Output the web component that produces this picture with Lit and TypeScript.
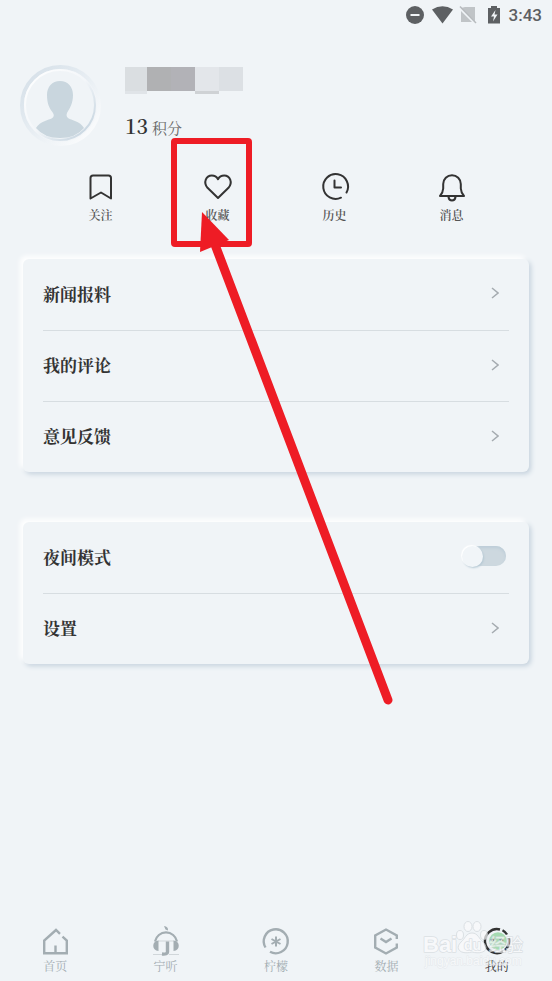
import { LitElement, html, css, svg } from "lit";
import { customElement, state } from "lit/decorators.js";

const bookmark = svg`<path d="M3.500 5Q3.500 2.500 6 2.500H21.500Q24 2.500 24 5V25.500L14 19.500L3.500 25.500Z"/>`;
const heart = svg`<path d="M14 25L3.500 14.800C-1 9.500 2 2.500 7.800 2.500C10.500 2.500 12.800 4 14 6.200C15.200 4 17.500 2.500 20.200 2.500C26 2.500 29 9.500 24.500 14.800Z"/>`;
const clock = svg`<path d="M20 24.700A12.400 12.400 0 1 1 25.500 19.500M13.500 7.500V14.500H20"/>`;
const bell = svg`<path d="M2 23Q5 19.500 5.200 15.500V11A8.800 8.800 0 0 1 22.800 11V15.500Q23 19.500 26 23Z"/><path d="M10.500 24Q11 27.500 14 27.500Q17 27.500 17.500 24"/>`;

const home = svg`<path d="M19 6.800L15 3L3.200 13.500V26.300H25.800V13.500L21.500 9.700M14.500 27V18.500"/>`;
const headset = svg`<path d="M3 14.500A11.200 11.200 0 0 1 25 14.500" stroke-width="2.200"/>
  <path d="M6.500 13.500V24C-.5 24-.5 13.500 6.500 13.500ZM21.500 13.500V24C28.500 24 28.500 13.500 21.500 13.500ZM12 -1Q16.500-.5 16 3.500L13.500 2.500Z" fill="currentColor" stroke="none"/>
  <path d="M6 14H22M1 27.500H10M17 27.500H27" stroke-width=".7" opacity=".6"/>
  <path d="M15.500 14.500V25Q15.500 27.500 10 27" stroke-width="3.400"/>`;
const lemon = svg`<path d="M3.500 20.500A12 12 0 1 1 8 24.800"/><path d="M14 9.500V19.500M9.500 12L18.500 17M18.500 12L9.500 17" stroke-width="2"/>`;
const hexagon = svg`<path d="M24.800 12V8.500L14 2.500L3.200 8.500V20.500L14 26.500L24.800 20.500V16.500"/><path d="M8.500 11.500L14 15L19.500 11.500"/>`;
const face = svg`<circle cx="15" cy="14" r="8.800" fill="#a5dbb1" stroke="none"/><path d="M17 2.500A12 12 0 1 0 20 24.500M19.500 3.200Q22.500 4.800 24 7.500M25.800 11A12 12 0 0 1 22 23"/><path d="M8 13.500Q9.500 11 11 13.500M17 13.500Q18.500 11 20 13.500" stroke-width="1.600"/>`;

const shortcuts = [
  { label: "关注", icon: bookmark },
  { label: "收藏", icon: heart },
  { label: "历史", icon: clock },
  { label: "消息", icon: bell },
];

const tabs = [
  { label: "首页", icon: home },
  { label: "宁听", icon: headset },
  { label: "柠檬", icon: lemon },
  { label: "数据", icon: hexagon },
  { label: "我的", icon: face, active: true },
];

@customElement("app-root")
export class AppRoot extends LitElement {
  @state() private night = false;

  static styles = css`
    :host {
      display: flex;
      flex-direction: column;
      position: relative;
      min-height: 100vh;
      box-sizing: border-box;
      overflow: hidden;
      background: #f0f4f7;
      color: #333;
      font-family: "Noto Serif CJK SC", "Liberation Serif", "Noto Sans CJK SC", serif;
    }
    a { color: inherit; text-decoration: none; }
    svg { display: block; }
    .status {
      display: flex;
      justify-content: flex-end;
      align-items: center;
      height: 30px;
      padding-right: 10px;
      color: #5d6063;
      font: 500 17px/30px Roboto, sans-serif;
    }
    .status svg { width: 94px; height: 20px; margin-right: 9px; }
    .profile {
      display: flex;
      gap: 24px;
      padding: 35px 20px 0;
    }
    .avatar {
      width: 81px;
      height: 81px;
    }
    .who { display: flex; flex-direction: column; padding-top: 2px; }
    .name { width: 118px; height: 27px; }
    .points {
      margin: 19px 0 0;
      display: flex;
      align-items: baseline;
      gap: 4px;
      line-height: 26px;
    }
    .points b { font-size: 20px; font-weight: 600; }
    .points span { font-size: 15px; color: #666; }
    .shortcuts {
      display: grid;
      grid-template-columns: repeat(4, 1fr);
      padding: 27px 42px 0;
    }
    .shortcut, .tab {
      display: flex;
      flex-direction: column;
      align-items: center;
      font-size: 12px;
      line-height: 16px;
    }
    .shortcut { font-weight: 600; color: #555; gap: 6px; }
    .icon {
      width: 28px;
      height: 28px;
      fill: none;
      stroke: #333;
      stroke-width: 2;
      stroke-linejoin: round;
      stroke-linecap: round;
      overflow: visible;
    }
    .card {
      margin: 36px 23px 0;
      padding: 0 20px;
      border-radius: 6px;
      background: #f0f4f7;
      box-shadow: -3px -3px 5px #fff, 2px 2px 5px #c3d0dc;
    }
    .card + .card { margin-top: 50px; }
    .row {
      display: flex;
      align-items: center;
      justify-content: space-between;
      box-sizing: border-box;
      height: 71px;
      padding-bottom: 3px;
      font-size: 17px;
      font-weight: 700;
    }
    .row + .row { border-top: 1px solid #d7dde1; }
    .chevron {
      width: 8px;
      height: 12px;
      margin-right: 10px;
      fill: none;
      stroke: #a5abb0;
      stroke-width: 1.5;
    }
    .switch {
      appearance: none;
      display: flex;
      align-items: center;
      width: 36px;
      height: 20px;
      margin: 0 3px 0 0;
      border-radius: 10px;
      background: #cdd8df;
      box-shadow: inset 0 2px 3px #bdcdd8;
    }
    .switch::before {
      content: "";
      width: 21px;
      height: 21px;
      flex: none;
      margin-left: -8px;
      border-radius: 50%;
      background: #f1f5f8;
      box-shadow: -1px -1px 1px #fff, 1px 1px 2px #b5c8d4;
    }
    .switch:checked::before { margin-left: 17px; }
    .tabs {
      display: grid;
      grid-template-columns: repeat(5, 1fr);
      margin-top: auto;
      padding: 20px 0 7px;
    }
    .tab { color: #a3adb2; gap: 3px; }
    .tab .icon {
      stroke: currentColor;
      stroke-width: 2.4;
      stroke-linecap: butt;
      stroke-linejoin: miter;
    }
    .tab.active { color: #333; }
    .overlay {
      position: absolute;
      top: 0;
      left: 0;
      pointer-events: none;
    }
    .watermark {
      position: absolute;
      right: 28px;
      bottom: 8px;
      pointer-events: none;
    }
    .watermark text {
      font-family: "Liberation Sans", "Noto Sans CJK SC", sans-serif;
      fill: #fafbfc;
      stroke: #d3d8dc;
      stroke-width: 1.5;
      stroke-linejoin: round;
      paint-order: stroke;
    }
    .watermark .site { stroke: #e0e4e8; stroke-width: 1; }
  `;

  private chevron() {
    return html`<svg class="chevron" viewBox="0 0 8 12" aria-hidden="true"><path d="M1 1L7 6L1 11" /></svg>`;
  }

  private icon(shape: unknown) {
    return html`<svg class="icon" viewBox="0 0 28 28" aria-hidden="true">${shape}</svg>`;
  }

  render() {
    return html`
      <div class="status">
        <svg viewBox="0 0 94 20" aria-hidden="true">
          <circle cx="9" cy="10" r="9" fill="#5d6063" />
          <path d="M4.500 10H13.500" stroke="#f0f4f7" stroke-width="2" />
          <path d="M26 4.500Q36.500-2 47 4.500L36.500 18.500Z" fill="#5d6063" />
          <path d="M59 2H69V16.500L55 3ZM55 6L66 17H55Z" fill="#c0c4c7" />
          <path d="M54 1.500L70 18" stroke="#b7bbbe" stroke-width="1.500" />
          <path d="M82 3H85V1H91V3H94V18.500H82Z" fill="#5d6063" />
          <path d="M89.500 5L85 11.500H88L87 16.500L91.500 9.500H88.500Z" fill="#f0f4f7" />
        </svg>
        <span>3:43</span>
      </div>

      <header class="profile">
        <svg class="avatar" viewBox="0 0 81 81" role="img" aria-label="头像">
          <defs>
            <linearGradient id="rim" x1="0" y1="0" x2="1" y2="1">
              <stop offset="0" stop-color="#d3dee7" /><stop offset=".5" stop-color="#e8eef3" /><stop offset="1" stop-color="#fff" />
            </linearGradient>
            <linearGradient id="inner" x1="0" y1="0" x2="1" y2="1">
              <stop offset="0" stop-color="#fff" /><stop offset=".5" stop-color="#f3f6f9" /><stop offset="1" stop-color="#bccdda" />
            </linearGradient>
            <clipPath id="disc"><circle cx="40" cy="40" r="34" /></clipPath>
          </defs>
          <circle cx="40.500" cy="40.500" r="38.500" fill="#f2f5f8" stroke="url(#rim)" stroke-width="4" />
          <circle cx="40" cy="40" r="35" fill="#f0f4f7" stroke="url(#inner)" stroke-width="2" />
          <path clip-path="url(#disc)" fill="#c9d6de" d="M40 16C48 16 53 22 53 30C53 38 50 43 47 48C45 53 50 54 55 56Q61 58 64 63Q56 73 40 73Q24 73 16 63Q19 58 25 56C30 54 36 53 33 48C29 43 27 38 27 30C27 22 32 16 40 16Z" />
        </svg>
        <div class="who">
          <svg class="name" viewBox="0 0 118 27" role="img" aria-label="用户名" shape-rendering="crispEdges">
            <rect width="22" height="24" fill="#dadee1" />
            <rect x="22" width="24" height="24" fill="#b0b1b3" />
            <rect x="46" width="24" height="24" fill="#b2b2b7" />
            <rect x="70" width="24" height="24" fill="#e3e6ea" />
            <rect x="94" width="24" height="24" fill="#dce0e4" />
            <rect y="24" width="22" height="3" fill="#e0e4e8" />
            <rect x="70" y="24" width="24" height="3" fill="#cfd2d5" />
          </svg>
          <p class="points"><b>13</b><span>积分</span></p>
        </div>
      </header>

      <nav class="shortcuts">
        ${shortcuts.map((s) => html`<a class="shortcut" href="#">${this.icon(s.icon)}<span>${s.label}</span></a>`)}
      </nav>

      <section class="card">
        ${["新闻报料", "我的评论", "意见反馈"].map(
          (label) => html`<a class="row" href="#"><span>${label}</span>${this.chevron()}</a>`
        )}
      </section>

      <section class="card">
        <div class="row">
          <label for="night">夜间模式</label>
          <input id="night" class="switch" type="checkbox" role="switch" .checked=${this.night}
            @change=${(e: Event) => (this.night = (e.target as HTMLInputElement).checked)} />
        </div>
        <a class="row" href="#"><span>设置</span>${this.chevron()}</a>
      </section>

      <nav class="tabs">
        ${tabs.map((t) => html`<a class="tab ${t.active ? "active" : ""}" href="#">${this.icon(t.icon)}<span>${t.label}</span></a>`)}
      </nav>

      <svg class="watermark" width="102" height="52" viewBox="0 0 102 52" opacity=".7">
        <g fill="#fafbfc" stroke="#d3d8dc" stroke-width="1">
          <ellipse cx="38" cy="14" rx="3.500" ry="4.500" />
          <ellipse cx="46" cy="5.500" rx="4" ry="5" />
          <ellipse cx="55" cy="5.500" rx="4" ry="5" />
          <ellipse cx="62" cy="14" rx="3.500" ry="4.500" />
          <path d="M50 12C56 12 57 18 61 21C68 28 62 34 50 31C39 34 32 28 39 21C43 18 44 12 50 12Z" />
        </g>
        <text x="1" y="31" font-size="22" font-weight="700">Bai</text>
        <text x="42" y="29" font-size="14" font-weight="700">du</text>
        <text x="67" y="30" font-size="17">经验</text>
        <text class="site" x="3" y="44" font-size="12">jingyan.baidu.com</text>
      </svg>

      <svg class="overlay" width="400" height="720" viewBox="0 0 400 720" aria-hidden="true">
        <rect x="174" y="141" width="75" height="103" rx="1" fill="none" stroke="#ee1c25" stroke-width="6" stroke-linejoin="round" />
        <path d="M214 242L388 700" stroke="#ee1c25" stroke-width="9" stroke-linecap="round" />
        <path d="M202 212L229 240L200 252Z" fill="#ee1c25" />
      </svg>
    `;
  }
}
